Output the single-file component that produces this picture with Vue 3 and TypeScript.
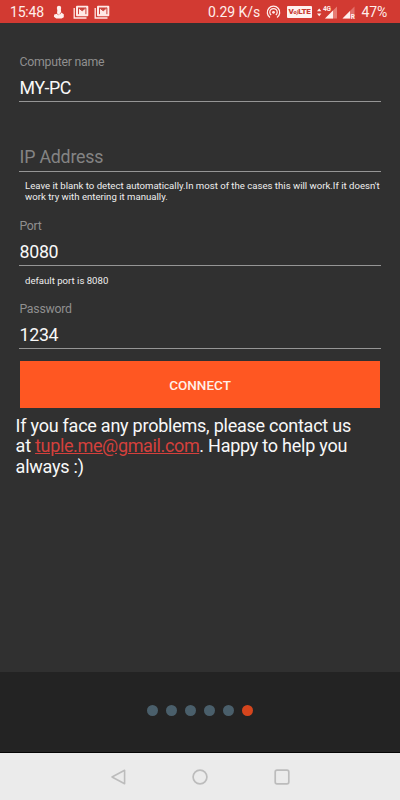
<script setup lang="ts">
import { ref } from 'vue'

const computerName = ref('MY-PC')
const port = ref('8080')
const password = ref('1234')
const pages = [0, 1, 2, 3, 4, 5]
const activePage = 5
</script>

<template>
  <div class="screen">
    <header class="status">
      <span class="clock">15:48</span>
      <svg class="person" width="12" height="14" viewBox="0 0 12 14">
        <circle cx="6" cy="2.9" r="2.2" fill="#ffefed" />
        <path d="M4.4 4h3.4l.4 3.4 2.6 1.8v3l-2.2 1.4H3.2L.9 11.8 1.2 9.6l2.8-.9z" fill="#ffefed" />
        <path d="M3.4 8.4l2.2 1.4M8.2 7.2L6.8 9.4" fill="none" stroke="#d23a32" stroke-width=".7" />
      </svg>
      <svg v-for="n in 2" :key="n" class="mail" width="16" height="14" viewBox="0 0 16 14">
        <path d="M1.2 3v10h12.3" fill="none" stroke="#ffe9e6" stroke-width="1.3" />
        <rect x="3" y=".8" width="12.3" height="10.4" rx="1" fill="#ffe9e6" />
        <path d="M5.5 9.2V2.8l3.7 3 3.7-3v6.4" fill="none" stroke="#cb4039" stroke-width="1" />
        <path d="M5.5 2.4h7.4L9.2 5.6z" fill="#cb4039" />
      </svg>
      <span class="speed">0.29 K/s</span>
      <svg class="hotspot" width="15" height="14" viewBox="0 0 15 14" fill="none" stroke="#ffefed" stroke-width="1.25">
        <path d="M4 12.5a6.2 6.2 0 1 1 7 0" />
        <path d="M5.2 10.1a3.7 3.7 0 1 1 4.6 0" />
        <circle cx="7.5" cy="7.3" r="1.4" fill="#ffefed" stroke="none" />
      </svg>
      <span class="volte">V<i>o)</i>LTE</span>
      <svg class="signal" width="21" height="15" viewBox="0 0 21 15">
        <path d="M0 6.3l2.2-2.8 2.2 2.8zM0 8.5l2.2 2.8 2.2-2.8z" fill="#ffefed" />
        <path d="M20 1.5v12H8z" fill="#e77c74" />
        <path d="M16 5.5v8H8z" fill="#ffefed" />
        <text x="6" y="6" class="tiny">4G</text>
      </svg>
      <svg class="signal2" width="15" height="15" viewBox="0 0 15 15">
        <path d="M13.5 1.5v12h-12z" fill="#e2706a" />
        <path d="M9 6v7.5H1.5z" fill="#ffefed" />
        <text x="9.7" y="14" class="tiny">R</text>
      </svg>
      <span class="battery">47%</span>
    </header>

    <main class="body">
      <label class="field name">
        <span class="label">Computer name</span>
        <input v-model="computerName" class="value" type="text" />
      </label>
      <label class="field ip">
        <input class="value v-ip" type="text" placeholder="IP Address" />
      </label>
      <p class="hint">
        Leave it blank to detect automatically.In most of the cases this will work.If it doesn't<br />
        work try with entering it manually.
      </p>
      <label class="field port">
        <span class="label">Port</span>
        <input v-model="port" class="value" type="text" />
      </label>
      <p class="hint single">default port is 8080</p>
      <label class="field password">
        <span class="label">Password</span>
        <input v-model="password" class="value" type="text" />
      </label>
      <button class="connect">CONNECT</button>
      <p class="contact">
        If you face any problems, please contact us<br />
        at <a class="link">tuple.me@gmail.com</a>. Happy to help you<br />
        always :)
      </p>
    </main>

    <footer class="pager">
      <span v-for="p in pages" :key="p" class="dot" :class="{ active: p === activePage }"></span>
    </footer>

    <nav class="nav">
      <svg width="18" height="18" viewBox="0 0 18 18" fill="none" stroke="#bcbcbc" stroke-width="1.6" stroke-linejoin="round">
        <path d="M15.6 2.3v13.4L3 9z" />
      </svg>
      <svg width="18" height="18" viewBox="0 0 18 18" fill="none" stroke="#bcbcbc" stroke-width="1.7">
        <circle cx="9" cy="9" r="6.9" />
      </svg>
      <svg width="18" height="18" viewBox="0 0 18 18" fill="none" stroke="#bcbcbc" stroke-width="1.7">
        <rect x="2.2" y="2.2" width="13.6" height="13.6" rx="1.8" />
      </svg>
    </nav>
  </div>
</template>

<style>
body {
  margin: 0;
  background: #303030;
}
</style>

<style scoped>
.screen {
  width: 400px;
  height: 800px;
  display: flex;
  flex-direction: column;
  overflow: hidden;
  background: #303030;
  color: #f8f8f8;
  font-family: Roboto, sans-serif;
}
.status {
  height: 23px;
  flex: none;
  box-sizing: border-box;
  display: flex;
  align-items: center;
  padding: 1px 0 0 10px;
  background: #d23a32;
  font-size: 14px;
  letter-spacing: -0.2px;
  line-height: 22px;
  white-space: nowrap;
  color: #ffeeeb;
}
.status svg {
  flex: none;
}
.clock {
  width: 43px;
}
.person {
  margin-right: 8px;
}
.mail {
  margin-right: 5px;
}
.speed {
  margin-left: 93px;
  width: 58px;
  letter-spacing: -0.05px;
}
.volte {
  flex: none;
  box-sizing: border-box;
  width: 25px;
  height: 12px;
  margin-left: 6px;
  border-radius: 1px;
  background: #fff2f0;
  color: #c83c35;
  font-size: 8px;
  line-height: 12.5px;
  font-weight: 900;
  text-align: center;
  letter-spacing: -0.3px;
}
.volte i {
  font-size: 6px;
}
.signal {
  margin-left: 5px;
}
.signal2 {
  margin-left: 3px;
}
.tiny {
  fill: #ffefed;
  font-size: 6.5px;
  font-weight: 700;
}
.battery {
  margin-left: 5.5px;
  letter-spacing: -0.1px;
}
.body {
  flex: none;
  height: 649px;
  box-sizing: border-box;
  padding: 30px 19px 0;
}
.field {
  display: flex;
  flex-direction: column;
  box-sizing: border-box;
  border-bottom: 1.5px solid #959595;
}
.name {
  height: 49px;
}
.label {
  height: 18px;
  line-height: 18px;
  font-size: 12.3px;
  letter-spacing: -0.24px;
  padding-left: 0.4px;
  color: #8f8f8f;
}
.value {
  width: 100%;
  height: 20px;
  box-sizing: border-box;
  margin: 7px 0 0;
  padding: 0 0 0 0.6px;
  border: 0;
  outline: 0;
  background: none;
  color: #f8f8f8;
  font: 17.8px/20px Roboto, sans-serif;
  letter-spacing: -0.35px;
}
.value::placeholder {
  color: #848484;
  opacity: 1;
  letter-spacing: -0.22px;
}
.ip {
  height: 70px;
}
.v-ip {
  margin-top: 45px;
}
.hint {
  margin: 8px 0 0 6px;
  font-size: 9.6px;
  line-height: 11px;
  white-space: nowrap;
  color: #eee;
}
.port {
  height: 49px;
  margin-top: 15px;
}
.single {
  margin-top: 9px;
}
.password {
  height: 49px;
  margin-top: 14px;
}
.connect {
  display: block;
  width: 360px;
  height: 47px;
  margin: 12px 0 0 1px;
  padding: 0;
  border: 0;
  background: #ff5722;
  color: #fff0e8;
  font: 500 13.5px/49px Roboto, sans-serif;
}
.contact {
  margin: 8px 0 0 -3.4px;
  font-size: 18px;
  letter-spacing: -0.24px;
  line-height: 20.4px;
  white-space: nowrap;
}
.link {
  color: #d4403c;
  letter-spacing: -0.36px;
  text-decoration: underline;
}
.pager {
  height: 81px;
  flex: none;
  box-sizing: border-box;
  display: flex;
  justify-content: center;
  align-items: center;
  gap: 8px;
  padding-bottom: 3px;
  background: #232323;
  border-bottom: 1px solid #050505;
}
.dot {
  width: 11px;
  height: 11px;
  border-radius: 50%;
  background: #4a5f6b;
}
.dot.active {
  background: #d5451d;
}
.nav {
  flex: 1;
  display: flex;
  justify-content: center;
  align-items: center;
  gap: 64px;
  background: #ebebeb;
}
</style>
